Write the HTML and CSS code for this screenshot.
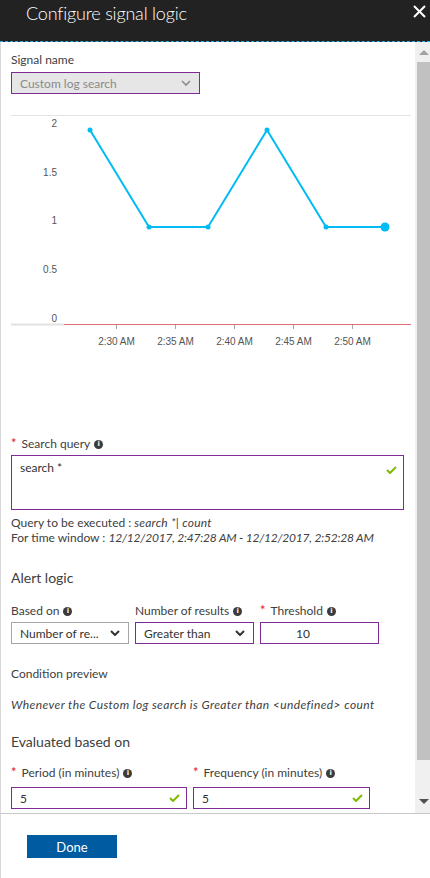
FILE: index.html
```html
<!DOCTYPE html>
<html lang="en">
<head>
<meta charset="utf-8">
<title>Configure signal logic</title>
<link rel="stylesheet" href="styles.css">
</head>
<body>
<div class="blade">
  <header class="hdr">
    <h1 class="title">Configure signal logic</h1>
    <button class="close" aria-label="Close">
      <svg width="13" height="13" viewBox="0 0 13 13"><path d="M1 1L12 12M12 1L1 12" stroke="#fff" stroke-width="2"/></svg>
    </button>
  </header>

  <div class="main">
    <div class="content">
      <div class="label">Signal name</div>
      <div class="select disabled sig">
        <span>Custom log search</span>
        <svg class="chev" width="10" height="6" viewBox="0 0 10 6"><path d="M1 1l4 4 4-4" fill="none" stroke="#8a8a8a" stroke-width="1.6"/></svg>
      </div>

      <svg class="chart" width="400" height="240" viewBox="0 0 400 240">
        <line x1="0" y1="7.5" x2="400" y2="7.5" stroke="#e3e3e3" stroke-width="1"/>
        <g class="ylab" text-anchor="end">
          <text x="46" y="19">2</text>
          <text x="46" y="68">1.5</text>
          <text x="46" y="116">1</text>
          <text x="46" y="165">0.5</text>
          <text x="46" y="214">0</text>
        </g>
        <line x1="0" y1="216.5" x2="53" y2="216.5" stroke="#e2e2e2" stroke-width="2"/>
        <line x1="53" y1="216.5" x2="400" y2="216.5" stroke="#e36b74" stroke-width="1.2"/>
        <g stroke="#a6a6a6" stroke-width="1">
          <line x1="105.5" y1="217" x2="105.5" y2="221"/>
          <line x1="164.5" y1="217" x2="164.5" y2="221"/>
          <line x1="223.5" y1="217" x2="223.5" y2="221"/>
          <line x1="282.5" y1="217" x2="282.5" y2="221"/>
          <line x1="341.5" y1="217" x2="341.5" y2="221"/>
        </g>
        <g class="xlab" text-anchor="middle">
          <text x="105.5" y="237">2:30 AM</text>
          <text x="164.5" y="237">2:35 AM</text>
          <text x="223.5" y="237">2:40 AM</text>
          <text x="282.5" y="237">2:45 AM</text>
          <text x="341.5" y="237">2:50 AM</text>
        </g>
        <polyline points="79,22 138,119 197,119 256,22 315,119 374,119" fill="none" stroke="#00bcf2" stroke-width="2" stroke-linejoin="round"/>
        <g fill="#00bcf2">
          <circle cx="79" cy="22" r="2.5"/>
          <circle cx="138" cy="119" r="2.5"/>
          <circle cx="197" cy="119" r="2.5"/>
          <circle cx="256" cy="22" r="2.5"/>
          <circle cx="315" cy="119" r="2.5"/>
          <circle cx="374" cy="119" r="4.5"/>
        </g>
      </svg>

      <div class="label req sq-label"><span class="star">*</span><span>Search query</span><span class="info">i</span></div>
      <div class="textarea">
        <span>search *</span>
        <svg class="check" width="11" height="8" viewBox="0 0 11 8"><path d="M1 4l3 3 6-6" fill="none" stroke="#7fba00" stroke-width="2"/></svg>
      </div>

      <div class="qinfo">
        <div>Query to be executed : <em class="q">search *| count</em></div>
        <div>For time window : <em class="dates">12/12/2017, 2:47:28 AM - 12/12/2017, 2:52:28 AM</em></div>
      </div>

      <h2 class="section alert">Alert logic</h2>

      <div class="row3">
        <div class="col">
          <div class="label">Based on<span class="info">i</span></div>
          <div class="select plain">
            <span>Number of re...</span>
            <svg class="chev" width="10" height="6" viewBox="0 0 10 6"><path d="M1 1l4 4 4-4" fill="none" stroke="#333" stroke-width="2"/></svg>
          </div>
        </div>
        <div class="col">
          <div class="label">Number of results<span class="info">i</span></div>
          <div class="select">
            <span>Greater than</span>
            <svg class="chev" width="10" height="6" viewBox="0 0 10 6"><path d="M1 1l4 4 4-4" fill="none" stroke="#333" stroke-width="2"/></svg>
          </div>
        </div>
        <div class="col">
          <div class="label req"><span class="star">*</span><span>Threshold</span><span class="info">i</span></div>
          <div class="input thr"><span>10</span></div>
        </div>
      </div>

      <div class="label cp">Condition preview</div>
      <div class="label preview"><em>Whenever the Custom log search is Greater than &lt;undefined&gt; count</em></div>

      <h2 class="section eval">Evaluated based on</h2>

      <div class="row2">
        <div class="col">
          <div class="label req"><span class="star">*</span><span>Period (in minutes)</span><span class="info">i</span></div>
          <div class="input">
            <span>5</span>
            <svg class="check" width="11" height="8" viewBox="0 0 11 8"><path d="M1 4l3 3 6-6" fill="none" stroke="#7fba00" stroke-width="2"/></svg>
          </div>
        </div>
        <div class="col">
          <div class="label req"><span class="star">*</span><span>Frequency (in minutes)</span><span class="info">i</span></div>
          <div class="input">
            <span>5</span>
            <svg class="check" width="11" height="8" viewBox="0 0 11 8"><path d="M1 4l3 3 6-6" fill="none" stroke="#7fba00" stroke-width="2"/></svg>
          </div>
        </div>
      </div>
    </div>

    <div class="scrollbar">
      <div class="sb-btn"><svg width="10" height="5" viewBox="0 0 10 5"><path d="M0 5L5 0L10 5Z" fill="#a3a3a3"/></svg></div>
      <div class="thumb"></div>
      <div class="sb-rest"><svg width="10" height="5" viewBox="0 0 10 5"><path d="M0 0L5 5L10 0Z" fill="#505050"/></svg></div>
    </div>
  </div>

  <footer class="footer">
    <button class="done">Done</button>
  </footer>
</div>
</body>
</html>
```

FILE: styles.css
```css
* { box-sizing: border-box; }

html, body {
  margin: 0;
  padding: 0;
  background: #fff;
}

body {
  font-family: Lato, "Open Sans", sans-serif;
  font-size: 12px;
  color: #404040;
}

.blade {
  width: 430px;
  height: 878px;
  display: flex;
  flex-direction: column;
  overflow: hidden;
}

.hdr {
  height: 42px;
  flex: none;
  background: #222222;
  border-bottom: 1px dashed #31aede;
  display: flex;
  align-items: flex-start;
  justify-content: space-between;
}

.title {
  margin: 0;
  padding: 0 0 0 26px;
  font-weight: 300;
  font-size: 18px;
  line-height: 26px;
  color: #fff;
  letter-spacing: -0.2px;
}

.close {
  border: 0;
  background: none;
  padding: 0;
  margin: 5px 3px 0 0;
  width: 14px;
  height: 14px;
  display: flex;
}

.main {
  height: 772px;
  flex: none;
  display: flex;
  border-left: 1px solid #d9d9d9;
  border-bottom: 1px solid #c8c8c8;
}

.content {
  flex: 1;
  padding: 10px 0 0 10px;
  overflow: hidden;
  display: flex;
  flex-direction: column;
  align-items: flex-start;
}

.label {
  line-height: 16px;
  display: flex;
  align-items: center;
  white-space: nowrap;
  color: #404040;
}

.label.req .star {
  color: #e81123;
  margin-right: 5px;
  font-size: 13px;
  position: relative;
  top: -1px;
}

.info {
  display: inline-flex;
  align-items: center;
  justify-content: center;
  width: 9px;
  height: 9px;
  border-radius: 50%;
  background: #3b3b3b;
  color: #fff;
  font-size: 7px;
  font-weight: 700;
  font-family: "DejaVu Sans", sans-serif;
  margin-left: 4px;
  line-height: 1;
}

.select, .input, .textarea {
  margin-top: 4px;
  height: 22px;
  border: 1px solid #7e2a97;
  display: flex;
  align-items: center;
  justify-content: space-between;
  padding: 0 8px 0 8px;
  background: #fff;
  color: #333;
  white-space: nowrap;
}

.select.sig {
  width: 189px;
  background: #e6e6e6;
  color: #8a8a8a;
  padding-right: 8px;
}

.select.plain {
  border-color: #a6a6a6;
}

.chart {
  margin-top: 14px;
  display: block;
  font-family: "Liberation Sans", sans-serif;
}

.ylab text, .xlab text {
  fill: #555;
  font-size: 10px;
}

.sq-label { margin-top: 88px; }

.textarea {
  width: 393px;
  height: 55px;
  margin-top: 3px;
  align-items: flex-start;
  padding: 4px 6px 0 8px;
}

.textarea .check { margin-top: 6px; }

.qinfo {
  margin-top: 5px;
  line-height: 15px;
  color: #404040;
}

.qinfo em { font-style: italic; }

.qinfo em.q { letter-spacing: 0.2px; }

.qinfo em.dates { letter-spacing: -0.2px; }

.section {
  margin: 0;
  font-weight: 400;
  font-size: 14px;
  line-height: 20px;
  color: #404040;
}

.alert { margin-top: 23px; }

.row3 {
  margin-top: 15px;
  display: grid;
  grid-template-columns: 118px 119px 119px;
  column-gap: 6px;
}

.row3 .select, .row3 .input { margin-top: 3px; }

.input.thr {
  justify-content: flex-start;
  padding-left: 35px;
}

.cp { margin-top: 22px; }

.preview { margin-top: 15px; }

.preview em { letter-spacing: 0.4px; }

.eval { margin-top: 19px; }

.row2 {
  margin-top: 13px;
  display: grid;
  grid-template-columns: 176px 177px;
  column-gap: 6px;
}

.row2 .input {
  margin-top: 6px;
  height: 22px;
  padding-right: 6px;
}

.scrollbar {
  width: 15px;
  flex: none;
  background: #f0f0f0;
  display: flex;
  flex-direction: column;
  align-items: flex-end;
}

.sb-btn {
  height: 20px;
  width: 13px;
  display: flex;
  align-items: center;
  justify-content: center;
  padding-top: 1px;
}

.thumb {
  width: 13px;
  height: 698px;
  background: #c1c1c1;
}

.sb-rest {
  flex: 1;
  width: 13px;
  display: flex;
  align-items: flex-end;
  justify-content: center;
  padding-bottom: 9px;
}

.footer {
  flex: 1;
  border-left: 1px solid #d9d9d9;
  padding: 21px 0 0 26px;
}

.done {
  width: 90px;
  height: 23px;
  border: 0;
  background: #005ba1;
  color: #fff;
  font-family: Lato, "Open Sans", sans-serif;
  font-size: 13px;
  padding: 0;
}
```
